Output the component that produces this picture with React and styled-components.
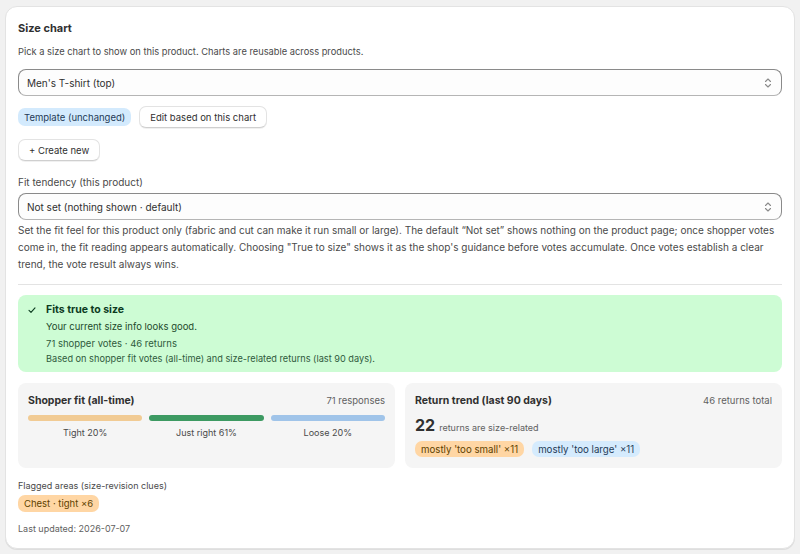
import React from 'react';
import styled, { createGlobalStyle } from 'styled-components';

const GlobalStyle = createGlobalStyle`
  html, body {
    margin: 0;
    padding: 0;
    background: #f1f1f1;
  }
  body {
    font-family: Inter, "Noto Sans", "Liberation Sans", sans-serif;
    color: #303030;
  }
`;

const Page = styled.div`
  padding: 6px 5px;
`;

const Card = styled.div`
  background: #fff;
  border-radius: 12px;
  border: 1px solid #e3e3e3;
  box-shadow: 0 1px 0 rgba(0, 0, 0, 0.08);
  padding: 12px 12px 11px 12px;
  display: flex;
  flex-direction: column;
`;

const Title = styled.h2`
  margin: 1px 0 0;
  font-size: 11px;
  font-weight: 650;
  line-height: 16px;
  color: #303030;
`;

const Text = styled.p`
  margin: ${p => p.$mt || 0}px 0 0;
  font-size: ${p => p.$size || 10}px;
  line-height: ${p => p.$lh || 16}px;
  color: ${p => p.$color || '#4a4a4a'};
`;

const SelectBox = styled.div`
  margin-top: ${p => p.$mt || 0}px;
  height: 27px;
  box-sizing: border-box;
  border: 1px solid #8a8a8a;
  border-bottom-color: #b5b5b5;
  border-radius: 8px;
  background: #fdfdfd;
  display: flex;
  align-items: center;
  justify-content: space-between;
  padding: 0 8px 0 8px;
  font-size: 10px;
  color: #303030;
`;

const Row = styled.div`
  margin-top: ${p => p.$mt || 0}px;
  display: flex;
  align-items: center;
  gap: ${p => p.$gap || 8}px;
`;

const Badge = styled.span`
  display: inline-flex;
  align-items: center;
  height: ${p => p.$h || 18}px;
  padding: 0 6px;
  border-radius: 7px;
  font-size: ${p => p.$size || 9.5}px;
  color: ${p => p.$color || '#303030'};
  background: ${p => p.$bg};
  white-space: nowrap;
`;

const Button = styled.button`
  font-family: inherit;
  height: 22px;
  padding: 0 10px;
  font-size: 9.5px;
  color: #303030;
  background: #fff;
  border: 1px solid #e3e3e3;
  border-bottom-color: #cfcfcf;
  border-radius: 7px;
  box-shadow: 0 1px 0 rgba(0, 0, 0, 0.06);
  cursor: pointer;
`;

const ButtonRow = styled.div`
  margin-top: ${p => p.$mt || 0}px;
  display: flex;
`;

const Divider = styled.hr`
  margin: 11px 0 0;
  border: none;
  border-top: 1px solid #e3e3e3;
`;

const Banner = styled.div`
  margin-top: 10px;
  background: #cdfcd4;
  border-radius: 8px;
  padding: 7px 10px 6px 10px;
  display: flex;
  gap: 10px;
`;

const BannerBody = styled.div`
  display: flex;
  flex-direction: column;
`;

const BannerTitle = styled.div`
  font-size: 10.5px;
  font-weight: 650;
  line-height: 16px;
  color: #0c3b1f;
`;

const StatsGrid = styled.div`
  margin-top: 11px;
  display: grid;
  grid-template-columns: 1fr 1fr;
  gap: 10px;
`;

const StatCard = styled.div`
  background: #f5f5f5;
  border-radius: 8px;
  padding: 10px 10px 8px;
  height: 85px;
  box-sizing: border-box;
`;

const StatHead = styled.div`
  display: flex;
  justify-content: space-between;
  align-items: center;
  line-height: 16px;
`;

const StatTitle = styled.span`
  font-size: 10.5px;
  font-weight: 650;
  color: #303030;
`;

const StatMeta = styled.span`
  font-size: 9.5px;
  color: #616161;
`;

const Bars = styled.div`
  margin-top: 6px;
  display: flex;
  gap: 7px;
`;

const BarCol = styled.div`
  display: flex;
  flex-direction: column;
  align-items: center;
  gap: 6px;
`;

const Bar = styled.div`
  width: 100%;
  height: 6px;
  border-radius: 3px;
  background: ${p => p.$color};
`;

const BarLabel = styled.span`
  font-size: 9px;
  color: #4a4a4a;
  line-height: 12px;
`;

const BigNum = styled.div`
  margin-top: 7px;
  display: flex;
  align-items: baseline;
  gap: 4px;
`;

const Num = styled.span`
  font-size: 16px;
  font-weight: 700;
  color: #303030;
  line-height: 18px;
`;

const NumNote = styled.span`
  font-size: 9px;
  color: #616161;
`;

const Chevrons = () => (
  <svg width="10" height="12" viewBox="0 0 10 12" fill="none" stroke="#8a8a8a" strokeWidth="1.1" strokeLinecap="round" strokeLinejoin="round">
    <path d="M2.5 4.5 L5 2 L7.5 4.5" />
    <path d="M2.5 7.5 L5 10 L7.5 7.5" />
  </svg>
);

const Check = () => (
  <svg width="8" height="8" viewBox="0 0 8 8" fill="none" stroke="#0c3b1f" strokeWidth="1.1" strokeLinecap="round" strokeLinejoin="round" style={{ marginTop: 4, flexShrink: 0 }}>
    <path d="M1 4.3 L3 6.3 L7 1.8" />
  </svg>
);

const fit = [
  { label: 'Tight 20%', color: '#f1cb94' },
  { label: 'Just right 61%', color: '#3d9a62' },
  { label: 'Loose 20%', color: '#a0c4e9' },
];

export default function App() {
  return (
    <>
      <GlobalStyle />
      <Page>
        <Card>
          <Title>Size chart</Title>
          <Text $mt={8} $size={9.3}>Pick a size chart to show on this product. Charts are reusable across products.</Text>
          <SelectBox $mt={9}>
            <span>Men's T-shirt (top)</span>
            <Chevrons />
          </SelectBox>
          <Row $mt={10}>
            <Badge $bg="#d3eafd" $color="#1f3b57">Template (unchanged)</Badge>
            <Button>Edit based on this chart</Button>
          </Row>
          <ButtonRow $mt={11}>
            <Button>+ Create new</Button>
          </ButtonRow>
          <Text $mt={13}>Fit tendency (this product)</Text>
          <SelectBox $mt={3}>
            <span>Not set (nothing shown · default)</span>
            <Chevrons />
          </SelectBox>
          <Text $mt={2} $size={10} $lh={17}>
            Set the fit feel for this product only (fabric and cut can make it run small or large). The default “Not set” shows nothing on the product page; once shopper votes come in, the fit reading appears automatically. Choosing "True to size" shows it as the shop's guidance before votes accumulate. Once votes establish a clear trend, the vote result always wins.
          </Text>
          <Divider />
          <Banner>
            <Check />
            <BannerBody>
              <BannerTitle>Fits true to size</BannerTitle>
              <Text $size={9.5} $lh={17} $color="#1d4a2c">Your current size info looks good.</Text>
              <Text $size={9.5} $lh={17} $color="#2f5a3c">71 shopper votes · 46 returns</Text>
              <Text $size={9.2} $lh={14} $color="#2f5a3c">Based on shopper fit votes (all-time) and size-related returns (last 90 days).</Text>
            </BannerBody>
          </Banner>
          <StatsGrid>
            <StatCard>
              <StatHead>
                <StatTitle>Shopper fit (all-time)</StatTitle>
                <StatMeta>71 responses</StatMeta>
              </StatHead>
              <Bars>
                {fit.map(f => (
                  <BarCol key={f.label} style={{ flex: 1 }}>
                    <Bar $color={f.color} />
                    <BarLabel>{f.label}</BarLabel>
                  </BarCol>
                ))}
              </Bars>
            </StatCard>
            <StatCard>
              <StatHead>
                <StatTitle>Return trend (last 90 days)</StatTitle>
                <StatMeta>46 returns total</StatMeta>
              </StatHead>
              <BigNum>
                <Num>22</Num>
                <NumNote>returns are size-related</NumNote>
              </BigNum>
              <Row $mt={7} $gap={8}>
                <Badge $bg="#ffd6a4" $color="#5e4200" $h={16} $size={9.7}>mostly 'too small' ×11</Badge>
                <Badge $bg="#d5ebfd" $color="#1f3b57" $h={16} $size={9.7}>mostly 'too large' ×11</Badge>
              </Row>
            </StatCard>
          </StatsGrid>
          <Text $mt={10} $size={9}>Flagged areas (size-revision clues)</Text>
          <Row $mt={1}>
            <Badge $bg="#ffd6a4" $color="#5e4200" $h={17} $size={9.5}>Chest · tight ×6</Badge>
          </Row>
          <Text $mt={9} $size={9} $color="#616161">Last updated: 2026-07-07</Text>
        </Card>
      </Page>
    </>
  );
}
